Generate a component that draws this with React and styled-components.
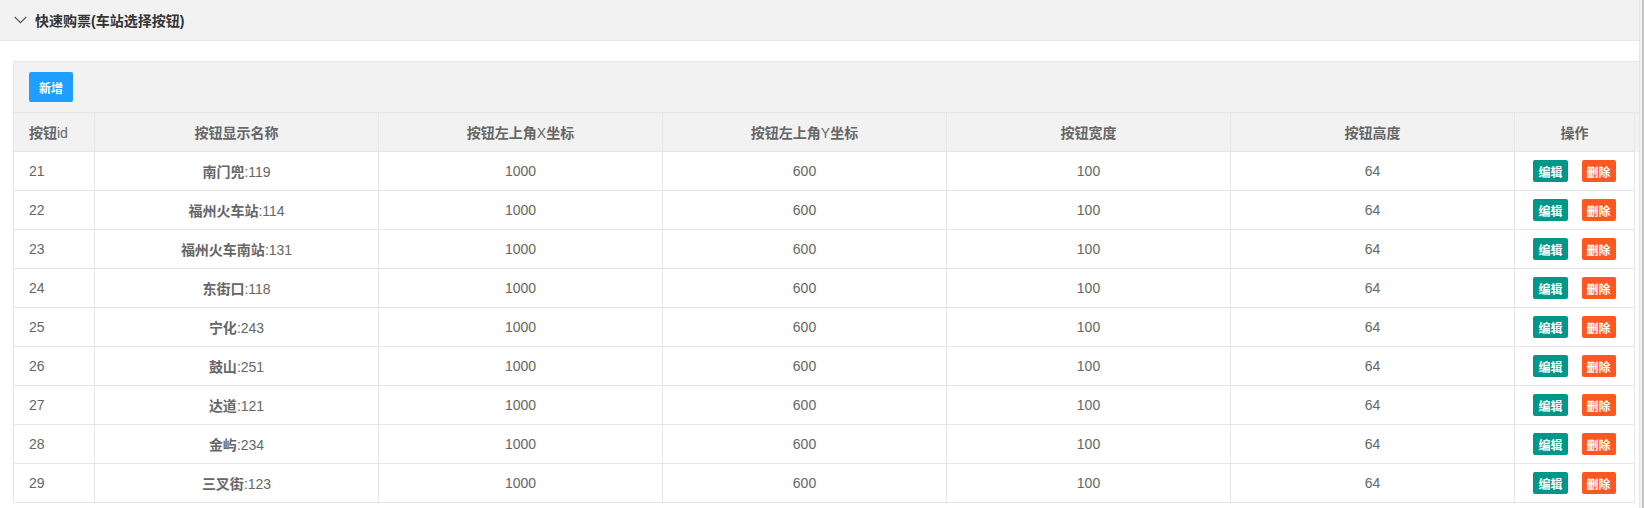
import React from "react";
import styled, { createGlobalStyle } from "styled-components";

const GlobalStyle = createGlobalStyle`
  html, body {
    margin: 0;
    padding: 0;
    background: #ffffff;
  }
  body {
    font-family: "Liberation Sans", "Noto Sans CJK SC", sans-serif;
    font-size: 14px;
    color: #666;
  }
  * { box-sizing: border-box; }
`;

const Page = styled.div`
  display: flex;
  width: 1644px;
  height: 508px;
  overflow: hidden;
`;

const Panel = styled.section`
  width: 1640px;
  flex: none;
  background: #fff;
  border-right: 1px solid #e6e6e6;
`;

const Gutter = styled.div`
  width: 4px;
  flex: none;
  background: #f2f2f2;
  border-right: 2px solid #c4c4c4;
`;

const TitleBar = styled.div`
  display: flex;
  align-items: center;
  gap: 8px;
  height: 41px;
  padding-left: 14px;
  background: #f2f2f2;
  border-bottom: 1px solid #e6e6e6;
  color: #333;
  font-size: 14px;
  font-weight: 700;
`;

const Content = styled.div`
  padding: 20px 0 0 13px;
`;

const TableView = styled.div`
  width: 1627px;
  border: 1px solid #e6e6e6;
  border-bottom: none;
  background: #fff;
`;

const Toolbar = styled.div`
  display: flex;
  align-items: center;
  height: 51px;
  padding: 0 15px;
  background: #f2f2f2;
  border-bottom: 1px solid #e6e6e6;
`;

const Btn = styled.button`
  display: inline-flex;
  align-items: center;
  justify-content: center;
  height: ${(p) => (p.$size === "xs" ? 22 : 30)}px;
  padding: 0 ${(p) => (p.$size === "xs" ? 5 : 10)}px;
  border: none;
  border-radius: 2px;
  background: ${(p) => p.$bg};
  color: #fff;
  font-family: "Liberation Sans", "Noto Sans CJK SC", sans-serif;
  font-size: 12px;
  font-weight: 700;
  cursor: pointer;
`;

const Grid = styled.div`
  width: 1625px;
  background: ${(p) => (p.$head ? "#f2f2f2" : "#fff")};
`;

const Row = styled.div`
  display: grid;
  grid-template-columns: 81px repeat(5, 284px) 120px;
  height: 39px;
`;

const Cell = styled.div`
  display: flex;
  align-items: center;
  justify-content: ${(p) => (p.$left ? "flex-start" : "center")};
  gap: 14px;
  padding: 0 15px;
  border-right: 1px solid #e6e6e6;
  border-bottom: 1px solid #e6e6e6;
  color: #666;
  font-size: 14px;
  font-weight: 400;
  white-space: nowrap;
  overflow: hidden;
`;

const Cjk = styled.span`
  font-weight: 700;
`;

const MixedText = ({ text }) => (
  <span>
    {String(text)
      .split(/([\u3400-\u9fff]+)/)
      .filter(Boolean)
      .map((part, i) =>
        /[\u3400-\u9fff]/.test(part) ? <Cjk key={i}>{part}</Cjk> : <React.Fragment key={i}>{part}</React.Fragment>
      )}
  </span>
);

const Chevron = () => (
  <svg width="13" height="8" viewBox="0 0 13 8" fill="none">
    <path d="M0.8 1 L6.5 6.6 L12.2 1" stroke="#555" strokeWidth="1.2" />
  </svg>
);

const columns = [
  { label: "按钮id", left: true },
  { label: "按钮显示名称" },
  { label: "按钮左上角X坐标" },
  { label: "按钮左上角Y坐标" },
  { label: "按钮宽度" },
  { label: "按钮高度" },
  { label: "操作" },
];

const rows = [
  [21, "南门兜", 119],
  [22, "福州火车站", 114],
  [23, "福州火车南站", 131],
  [24, "东街口", 118],
  [25, "宁化", 243],
  [26, "鼓山", 251],
  [27, "达道", 121],
  [28, "金屿", 234],
  [29, "三叉街", 123],
];

export default function App() {
  return (
    <>
      <GlobalStyle />
      <Page>
        <Panel>
          <TitleBar>
            <Chevron />
            <span>快速购票(车站选择按钮)</span>
          </TitleBar>
          <Content>
            <TableView>
              <Toolbar>
                <Btn $bg="#1E9FFF">新增</Btn>
              </Toolbar>
              <Grid $head>
                <Row>
                  {columns.map((c) => (
                    <Cell key={c.label} $left={c.left}>
                      <MixedText text={c.label} />
                    </Cell>
                  ))}
                </Row>
              </Grid>
              <Grid>
                {rows.map(([id, name, code]) => (
                  <Row key={id}>
                    <Cell $left>{id}</Cell>
                    <Cell>
                      <MixedText text={`${name}:${code}`} />
                    </Cell>
                    <Cell>1000</Cell>
                    <Cell>600</Cell>
                    <Cell>100</Cell>
                    <Cell>64</Cell>
                    <Cell>
                      <Btn $size="xs" $bg="#009688">编辑</Btn>
                      <Btn $size="xs" $bg="#FF5722">删除</Btn>
                    </Cell>
                  </Row>
                ))}
              </Grid>
            </TableView>
          </Content>
        </Panel>
        <Gutter />
      </Page>
    </>
  );
}
